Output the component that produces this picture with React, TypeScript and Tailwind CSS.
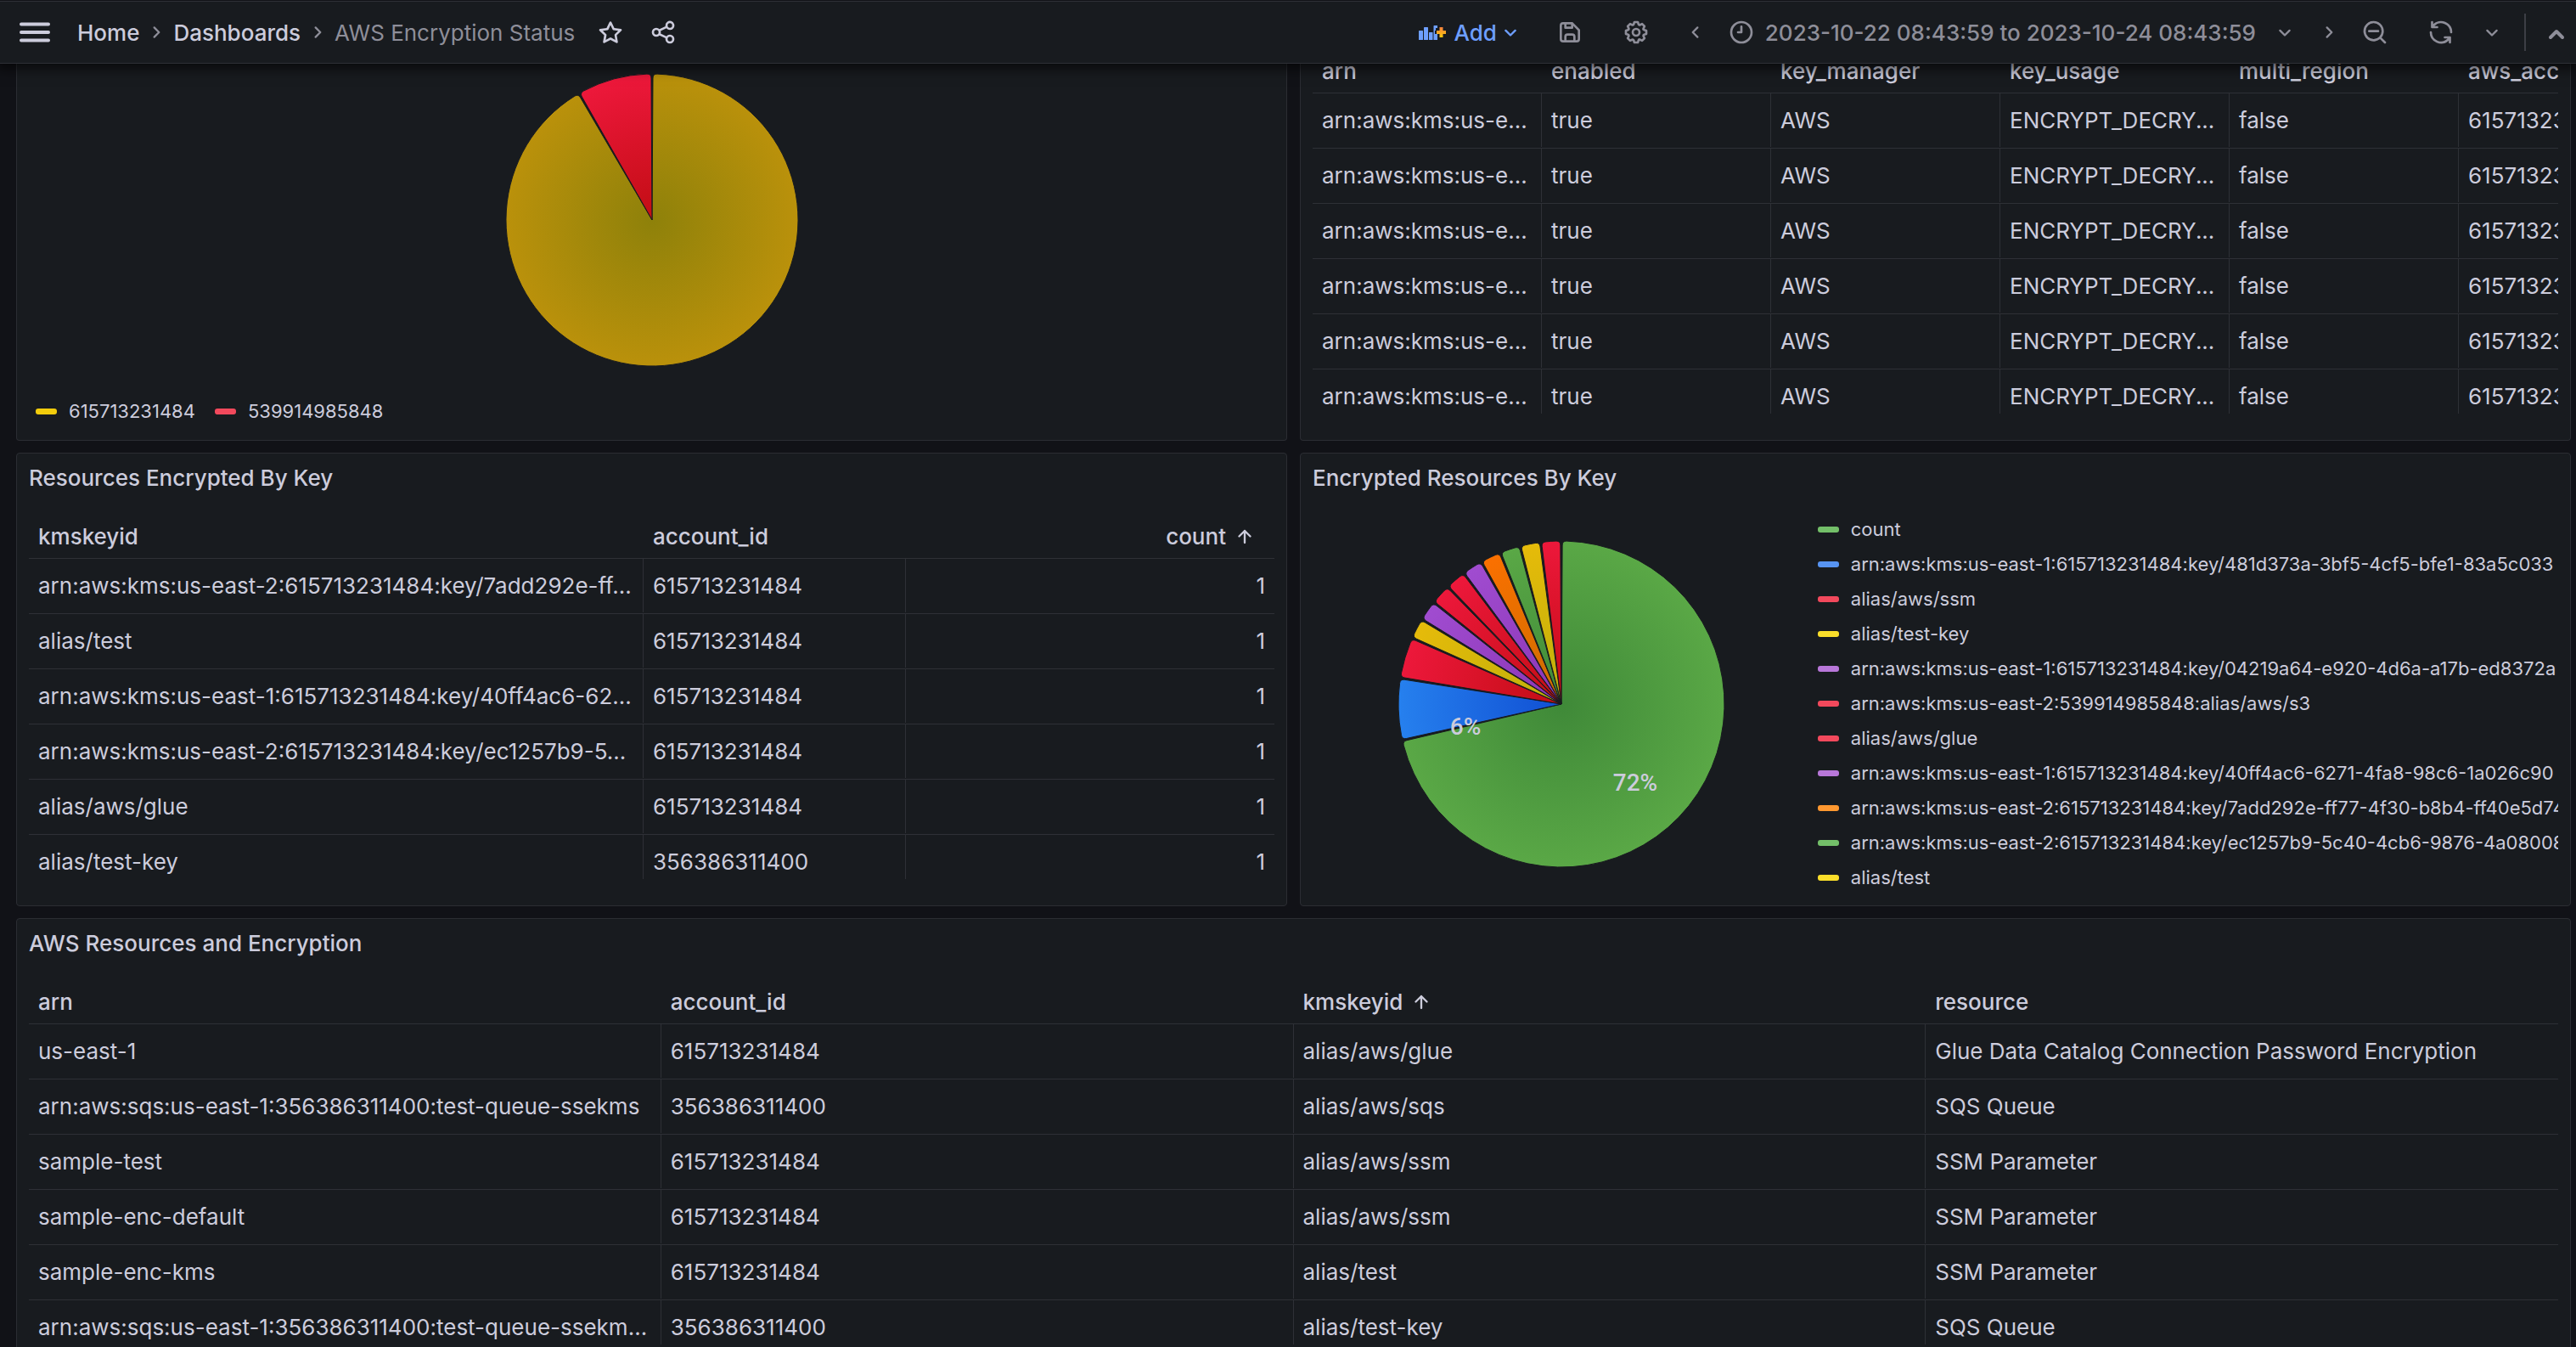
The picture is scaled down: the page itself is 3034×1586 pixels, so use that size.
import type { ReactNode } from "react";

const ICONS = {
  star: "M22,9.67A1,1,0,0,0,21.14,9l-5.69-.83L12.9,3a1,1,0,0,0-1.8,0L8.55,8.16,2.86,9a1,1,0,0,0-.81.68,1,1,0,0,0,.25,1l4.13,4-1,5.68A1,1,0,0,0,6.9,21.44L12,18.77l5.1,2.67a.93.93,0,0,0,.46.12,1,1,0,0,0,.59-.19,1,1,0,0,0,.4-1l-1-5.68,4.13-4A1,1,0,0,0,22,9.67Zm-6.15,4a1,1,0,0,0-.29.88l.72,4.2-3.76-2a1.06,1.06,0,0,0-.94,0l-3.76,2,.72-4.2a1,1,0,0,0-.29-.88l-3-3,4.21-.61a1,1,0,0,0,.76-.55L12,5.7l1.88,3.82a1,1,0,0,0,.76.55l4.21.61Z",
  share:
    "M18,14a4,4,0,0,0-3.08,1.48l-5.1-2.35a3.64,3.64,0,0,0,0-2.26l5.1-2.35A4,4,0,1,0,14,6a4.17,4.17,0,0,0,.07.71L8.79,9.14a4,4,0,1,0,0,5.72l5.28,2.43A4.17,4.17,0,0,0,14,18a4,4,0,1,0,4-4ZM18,4a2,2,0,1,1-2,2A2,2,0,0,1,18,4ZM6,14a2,2,0,1,1,2-2A2,2,0,0,1,6,14Zm12,6a2,2,0,1,1,2-2A2,2,0,0,1,18,20Z",
  save: "m20.71 9.29-6-6a1 1 0 0 0-.32-.21A1.09 1.09 0 0 0 14 3H6a3 3 0 0 0-3 3v12a3 3 0 0 0 3 3h12a3 3 0 0 0 3-3v-8a1 1 0 0 0-.29-.71ZM9 5h4v2H9Zm6 14H9v-3a1 1 0 0 1 1-1h4a1 1 0 0 1 1 1Zm4-1a1 1 0 0 1-1 1h-1v-3a3 3 0 0 0-3-3h-4a3 3 0 0 0-3 3v3H6a1 1 0 0 1-1-1V6a1 1 0 0 1 1-1h1v3a1 1 0 0 0 1 1h6a1 1 0 0 0 1-1V6.41l4 4Z",
  cog: "M21.32,9.55,19.43,8.92l.89-1.78A1,1,0,0,0,20.13,6L18,3.87a1,1,0,0,0-1.15-.19l-1.78.89L14.45,2.68A1,1,0,0,0,13.5,2h-3a1,1,0,0,0-.95.68L8.92,4.57,7.14,3.68A1,1,0,0,0,6,3.87L3.87,6a1,1,0,0,0-.19,1.15l.89,1.78-1.89.63A1,1,0,0,0,2,10.5v3a1,1,0,0,0,.68.95l1.89.63-.89,1.78A1,1,0,0,0,3.87,18L6,20.13a1,1,0,0,0,1.15.19l1.78-.89.63,1.89a1,1,0,0,0,.95.68h3a1,1,0,0,0,.95-.68l.63-1.89,1.78.89A1,1,0,0,0,18,20.13L20.13,18a1,1,0,0,0,.19-1.15l-.89-1.78,1.89-.63A1,1,0,0,0,22,13.5v-3A1,1,0,0,0,21.32,9.55ZM20,12.78l-1.2.4A2,2,0,0,0,17.64,16l.57,1.14-1.1,1.1L16,17.64a2,2,0,0,0-2.79,1.16l-.4,1.2H11.22l-.4-1.2A2,2,0,0,0,8,17.64l-1.14.57-1.1-1.1L6.36,16A2,2,0,0,0,5.2,13.18L4,12.78V11.22l1.2-.4A2,2,0,0,0,6.36,8L5.79,6.89l1.1-1.1L8,6.36A2,2,0,0,0,10.82,5.2l.4-1.2h1.56l.4,1.2A2,2,0,0,0,16,6.36l1.14-.57,1.1,1.1L17.64,8a2,2,0,0,0,1.16,2.79l1.2.4ZM12,8a4,4,0,1,0,4,4A4,4,0,0,0,12,8Zm0,6a2,2,0,1,1,2-2A2,2,0,0,1,12,14Z",
  clock:
    "M12,6a1,1,0,0,0-1,1v4H9a1,1,0,0,0,0,2h3a1,1,0,0,0,1-1V7A1,1,0,0,0,12,6Zm0-4A10,10,0,1,0,22,12,10,10,0,0,0,12,2Zm0,18a8,8,0,1,1,8-8A8,8,0,0,1,12,20Z",
  zoomOut:
    "M21.71,20.29,18,16.61A9,9,0,1,0,16.61,18l3.68,3.68a1,1,0,0,0,1.42,0A1,1,0,0,0,21.71,20.29ZM11,18a7,7,0,1,1,7-7A7,7,0,0,1,11,18Zm4-8H7a1,1,0,0,0,0,2h8a1,1,0,0,0,0-2Z",
  sync: "M19.91,15.51H15.38a1,1,0,0,0,0,2h2.4A8,8,0,0,1,4,12a1,1,0,1,0-2,0,10,10,0,0,0,16.88,7.23V21a1,1,0,0,0,2,0V16.5A1,1,0,0,0,19.91,15.51ZM12,2A10,10,0,0,0,5.12,4.77V3a1,1,0,0,0-2,0V7.5a1,1,0,0,0,1,1h4.5a1,1,0,0,0,0-2H6.22A8,8,0,0,1,20,12a1,1,0,0,0,2,0A10,10,0,0,0,12,2Z",
};

function Icon({ name }: { name: keyof typeof ICONS }) {
  return (
    <svg viewBox="0 0 24 24" className="block size-8 shrink-0" fill="currentColor" aria-hidden="true">
      <path d={ICONS[name]} />
    </svg>
  );
}

const CHEVRONS = {
  down: "M7.2 10.2l4.8 4.8 4.8-4.8",
  right: "M10 7.2l4.8 4.8-4.8 4.8",
  left: "M14 7.2L9.2 12l4.8 4.8",
  arrowUp: "M12 18V6M6.4 11.600l5.6-5.600 5.6 5.600",
};

function Chevron({ dir }: { dir: keyof typeof CHEVRONS }) {
  return (
    <svg
      viewBox="0 0 24 24"
      className="block size-7 shrink-0"
      fill="none"
      stroke="currentColor"
      strokeWidth="2"
      strokeLinecap="round"
      strokeLinejoin="round"
      aria-hidden="true"
    >
      <path d={CHEVRONS[dir]} />
    </svg>
  );
}

function IconButton({ label, className = "", children }: { label: string; className?: string; children: ReactNode }) {
  return (
    <button type="button" aria-label={label} className={`shrink-0 ${className}`}>
      {children}
    </button>
  );
}

function AddIcon() {
  return (
    <svg viewBox="0 0 33 20" className="block h-5 w-[33px] shrink-0" aria-hidden="true">
      <defs>
        <linearGradient id="plus" x1="0" y1="0" x2="0" y2="1">
          <stop offset="0" stopColor="#f5803e" />
          <stop offset="1" stopColor="#fbca0a" />
        </linearGradient>
      </defs>
      <g fill="#6e9fff">
        <rect x="0" y="8" width="5" height="11" rx="0.5" />
        <rect x="6" y="4" width="5" height="15" rx="0.5" />
        <rect x="12" y="10" width="4.500" height="9" rx="0.5" />
        <path d="M18 2h4v3h-2v3h-1v4h3v7h-4.500V2.500z" />
      </g>
      <path d="M24.500 4h4v4h3.500v4h-3.500v4h-4v-4H21V8h3.500z" fill="url(#plus)" />
    </svg>
  );
}

function TopBar() {
  return (
    <header className="relative z-10 bg-[#111217] pt-px shadow-[0_2px_14px_4px_rgba(0,0,0,0.65)]">
      <div className="flex h-[74px] items-center border-y border-[#2e3036] bg-[#181b1f] pr-[5px] pl-[23px] text-[26px] text-[#8e8e99]">
        <IconButton label="Open menu" className="mr-8 text-[#ccccdc]">
          <svg viewBox="0 0 36 24" className="block h-6 w-9" stroke="currentColor" strokeWidth="4" strokeLinecap="round" aria-hidden="true">
            <path d="M2 2.500h32M2 12h32M2 21.500h32" />
          </svg>
        </IconButton>
        <nav aria-label="Breadcrumb" className="flex items-center gap-1.5">
          <a href="#home" className="font-medium text-[#ccccdc]">
            Home
          </a>
          <Chevron dir="right" />
          <a href="#dashboards" className="font-medium text-[#ccccdc]">
            Dashboards
          </a>
          <Chevron dir="right" />
          <span>AWS Encryption Status</span>
        </nav>
        <IconButton label="Mark as favorite" className="ml-[26px] text-[#ccccdc]">
          <Icon name="star" />
        </IconButton>
        <IconButton label="Share dashboard" className="ml-[30px] text-[#ccccdc]">
          <Icon name="share" />
        </IconButton>
        <div className="ml-auto flex items-center font-medium whitespace-nowrap">
          <button type="button" className="flex items-center text-[#6e9fff]">
            <AddIcon />
            <span className="mr-0.5 ml-2">Add</span>
            <Chevron dir="down" />
          </button>
          <IconButton label="Save dashboard" className="ml-10">
            <Icon name="save" />
          </IconButton>
          <IconButton label="Dashboard settings" className="ml-[46px]">
            <Icon name="cog" />
          </IconButton>
          <IconButton label="Move time range backwards" className="ml-10">
            <Chevron dir="left" />
          </IconButton>
          <button type="button" className="ml-6 flex items-center">
            <Icon name="clock" />
            <span className="mr-5 ml-3">2023-10-22 08:43:59 to 2023-10-24 08:43:59</span>
            <Chevron dir="down" />
          </button>
          <IconButton label="Move time range forwards" className="ml-6">
            <Chevron dir="right" />
          </IconButton>
          <IconButton label="Zoom out time range" className="ml-6">
            <Icon name="zoomOut" />
          </IconButton>
          <IconButton label="Refresh dashboard" className="ml-[46px]">
            <Icon name="sync" />
          </IconButton>
          <IconButton label="Auto refresh interval" className="ml-[30px]">
            <Chevron dir="down" />
          </IconButton>
          <div className="ml-6 h-11 w-0.5 bg-[#3c3e45]" />
          <IconButton label="Collapse top bar" className="ml-[18px]">
            <svg viewBox="0 0 36 36" className="block size-9" fill="none" stroke="currentColor" strokeWidth="4" strokeLinecap="round" strokeLinejoin="round" aria-hidden="true">
              <path d="M11 24l7-7 7 7" />
            </svg>
          </IconButton>
        </div>
      </div>
    </header>
  );
}

function Panel({ title, className = "", children }: { title?: string; className?: string; children: ReactNode }) {
  return (
    <section className={`flex min-w-0 flex-col border border-[#2b2d33] bg-[#181b1f] px-3.5 ${className}`}>
      {title && <h2 className="h-[58px] shrink-0 text-[26px] leading-[58px] font-medium">{title}</h2>}
      {children}
    </section>
  );
}

type Column = { name: string; width: string; sorted?: boolean; right?: boolean };

function DataTable({ label, columns, rows, className = "w-full" }: { label: string; columns: Column[]; rows: string[][]; className?: string }) {
  return (
    <div className="mb-[31px] h-[429px] overflow-hidden">
      <table aria-label={label} className={`table-fixed border-separate border-spacing-0 text-left text-[26px] whitespace-nowrap ${className}`}>
        <thead>
          <tr>
            {columns.map((c) => (
              <th key={c.name} scope="col" className={`h-[52px] border-b border-[#2e3036] p-0 px-[11px] font-medium ${c.width}`}>
                <div className={`flex items-center gap-2 ${c.right ? "justify-end pr-2.5" : ""}`}>
                  {c.name}
                  {c.sorted && <Chevron dir="arrowUp" />}
                </div>
              </th>
            ))}
          </tr>
        </thead>
        <tbody>
          {rows.map((row, r) => (
            <tr key={r}>
              {row.map((cell, i) => (
                <td key={i} className="h-[65px] border-b border-[#2e3036] p-0 align-top">
                  <div
                    className={`h-[63px] overflow-hidden px-[11px] leading-[63px] ${i < row.length - 1 ? "border-r border-[#2e3036]" : ""} ${columns[i].right ? "text-right" : ""}`}
                  >
                    {cell}
                  </div>
                </td>
              ))}
            </tr>
          ))}
        </tbody>
      </table>
    </div>
  );
}

type Slice = { value: number; inner: string; outer: string };

function slicePath(r: number, start: number, end: number) {
  const pad = 0.006;
  const corner = 5;
  const a0 = start + pad;
  const a1 = end - pad;
  const da = corner / r;
  const pt = (radius: number, a: number) => `${(r + radius * Math.sin(a)).toFixed(2)} ${(r - radius * Math.cos(a)).toFixed(2)}`;
  const large = a1 - a0 > Math.PI ? 1 : 0;
  return `M${r} ${r}L${pt(r - corner, a0)}Q${pt(r, a0)} ${pt(r, a0 + da)}A${r} ${r} 0 ${large} 1 ${pt(r, a1 - da)}Q${pt(r, a1)} ${pt(r - corner, a1)}Z`;
}

function Pie({ id, label, radius, slices, className, children }: { id: string; label: string; radius: number; slices: Slice[]; className: string; children?: ReactNode }) {
  const total = slices.reduce((sum, s) => sum + s.value, 0);
  let used = 0;
  return (
    <svg viewBox={`0 0 ${radius * 2} ${radius * 2}`} className={`block shrink-0 ${className}`} role="img" aria-label={label}>
      {slices.map((s, i) => {
        const start = (used / total) * Math.PI * 2;
        used += s.value;
        const end = (used / total) * Math.PI * 2;
        return (
          <g key={i}>
            <radialGradient id={`${id}-${i}`} gradientUnits="userSpaceOnUse" cx={radius} cy={radius} r={radius}>
              <stop offset="0" stopColor={s.inner} />
              <stop offset="1" stopColor={s.outer} />
            </radialGradient>
            <path d={slicePath(radius, start, end)} fill={`url(#${id}-${i})`} stroke="#181b1f" strokeWidth="1" />
          </g>
        );
      })}
      {children}
    </svg>
  );
}

const GREEN = { inner: "#3f8938", outer: "#5aa846" };
const BLUE = { inner: "#104fd3", outer: "#2680ee" };
const RED = { inner: "#c20d14", outer: "#ed183b" };
const YELLOW = { inner: "#bdaf0a", outer: "#e6bb0a" };
const PURPLE = { inner: "#8b35b4", outer: "#a04cd0" };
const ORANGE = { inner: "#c96d00", outer: "#fb7000" };

const ACCOUNT_SLICES: Slice[] = [
  { value: 11, inner: "#8e810a", outer: "#ba910b" },
  { value: 1, ...RED },
];

const KEY_SLICES: Slice[] = [
  { value: 35, ...GREEN },
  { value: 3, ...BLUE },
  { value: 2, ...RED },
  { value: 1, ...YELLOW },
  { value: 1, ...PURPLE },
  { value: 1, ...RED },
  { value: 1, ...RED },
  { value: 1, ...PURPLE },
  { value: 1, ...ORANGE },
  { value: 1, ...GREEN },
  { value: 1, ...YELLOW },
  { value: 1, ...RED },
];

const KEY_LEGEND = [
  ["bg-[#73bf69]", "count"],
  ["bg-[#5794f2]", "arn:aws:kms:us-east-1:615713231484:key/481d373a-3bf5-4cf5-bfe1-83a5c033"],
  ["bg-[#f2495c]", "alias/aws/ssm"],
  ["bg-[#fade2a]", "alias/test-key"],
  ["bg-[#b877d9]", "arn:aws:kms:us-east-1:615713231484:key/04219a64-e920-4d6a-a17b-ed8372a"],
  ["bg-[#f2495c]", "arn:aws:kms:us-east-2:539914985848:alias/aws/s3"],
  ["bg-[#f2495c]", "alias/aws/glue"],
  ["bg-[#b877d9]", "arn:aws:kms:us-east-1:615713231484:key/40ff4ac6-6271-4fa8-98c6-1a026c90"],
  ["bg-[#ff9830]", "arn:aws:kms:us-east-2:615713231484:key/7add292e-ff77-4f30-b8b4-ff40e5d74"],
  ["bg-[#73bf69]", "arn:aws:kms:us-east-2:615713231484:key/ec1257b9-5c40-4cb6-9876-4a08008"],
  ["bg-[#fade2a]", "alias/test"],
];

function LegendItem({ color, children }: { color: string; children: ReactNode }) {
  return (
    <li className="flex h-[41px] items-center gap-3.5 whitespace-nowrap">
      <span className={`h-[7px] w-[25px] shrink-0 rounded-[3px] ${color}`} />
      {children}
    </li>
  );
}

const KMS_COLUMNS: Column[] = ["arn", "enabled", "key_manager", "key_usage", "multi_region", "aws_account_id"].map((name) => ({
  name,
  width: "w-[270px]",
}));
const KMS_ROWS = Array.from({ length: 6 }, () => ["arn:aws:kms:us-e...", "true", "AWS", "ENCRYPT_DECRY...", "false", "615713231484"]);

const BY_KEY_COLUMNS: Column[] = [
  { name: "kmskeyid", width: "w-[724px]" },
  { name: "account_id", width: "w-[309px]" },
  { name: "count", width: "w-auto", sorted: true, right: true },
];
const BY_KEY_ROWS = [
  ["arn:aws:kms:us-east-2:615713231484:key/7add292e-ff...", "615713231484", "1"],
  ["alias/test", "615713231484", "1"],
  ["arn:aws:kms:us-east-1:615713231484:key/40ff4ac6-62...", "615713231484", "1"],
  ["arn:aws:kms:us-east-2:615713231484:key/ec1257b9-5...", "615713231484", "1"],
  ["alias/aws/glue", "615713231484", "1"],
  ["alias/test-key", "356386311400", "1"],
];

const RESOURCE_COLUMNS: Column[] = [
  { name: "arn", width: "w-1/4" },
  { name: "account_id", width: "w-1/4" },
  { name: "kmskeyid", width: "w-1/4", sorted: true },
  { name: "resource", width: "w-1/4" },
];
const RESOURCE_ROWS = [
  ["us-east-1", "615713231484", "alias/aws/glue", "Glue Data Catalog Connection Password Encryption"],
  ["arn:aws:sqs:us-east-1:356386311400:test-queue-ssekms", "356386311400", "alias/aws/sqs", "SQS Queue"],
  ["sample-test", "615713231484", "alias/aws/ssm", "SSM Parameter"],
  ["sample-enc-default", "615713231484", "alias/aws/ssm", "SSM Parameter"],
  ["sample-enc-kms", "615713231484", "alias/test", "SSM Parameter"],
  ["arn:aws:sqs:us-east-1:356386311400:test-queue-ssekm...", "356386311400", "alias/test-key", "SQS Queue"],
];

export default function App() {
  return (
    <div className="h-screen overflow-hidden bg-[#111217] font-['Inter',sans-serif] text-[#ccccdc]">
      <TopBar />
      <main className="-mt-[17px] grid grid-cols-2 gap-x-[15px] gap-y-3.5 pr-1.5 pl-[19px]">
        <Panel className="rounded-b border-t-0">
          <div className="flex grow flex-col items-center pt-[29px]">
            <Pie id="accounts" label="Keys by account" radius={172} slices={ACCOUNT_SLICES} className="size-[344px]" />
          </div>
          <ul className="mb-[13px] flex gap-[23px] pl-2 text-[22px]">
            <LegendItem color="bg-[#f2cc0c]">615713231484</LegendItem>
            <LegendItem color="bg-[#f2495c]">539914985848</LegendItem>
          </ul>
        </Panel>
        <Panel className="rounded-b border-t-0">
          <DataTable label="KMS keys" columns={KMS_COLUMNS} rows={KMS_ROWS} className="w-[1620px]" />
        </Panel>
        <Panel title="Resources Encrypted By Key" className="rounded">
          <div className="pt-3.5">
            <DataTable label="Resources Encrypted By Key" columns={BY_KEY_COLUMNS} rows={BY_KEY_ROWS} />
          </div>
        </Panel>
        <Panel title="Encrypted Resources By Key" className="rounded">
          <div className="flex pt-[11px]">
            <div className="flex w-2/5 items-center justify-center">
              <Pie id="keys" label="Encrypted resources by key" radius={192} slices={KEY_SLICES} className="size-[384px]">
                <g className="font-['Roboto',sans-serif] font-medium" fill="#ccccdc" fontSize="28" textAnchor="middle">
                  <text x="279" y="294">
                    72%
                  </text>
                  <text x="79" y="228">
                    6%
                  </text>
                </g>
              </Pie>
            </div>
            <ul className="w-3/5 overflow-hidden pl-2 text-[22px]">
              {KEY_LEGEND.map(([color, name]) => (
                <LegendItem key={name} color={color}>
                  {name}
                </LegendItem>
              ))}
            </ul>
          </div>
        </Panel>
        <Panel title="AWS Resources and Encryption" className="col-span-2 rounded">
          <div className="pt-3.5">
            <DataTable label="AWS Resources and Encryption" columns={RESOURCE_COLUMNS} rows={RESOURCE_ROWS} />
          </div>
        </Panel>
      </main>
    </div>
  );
}
